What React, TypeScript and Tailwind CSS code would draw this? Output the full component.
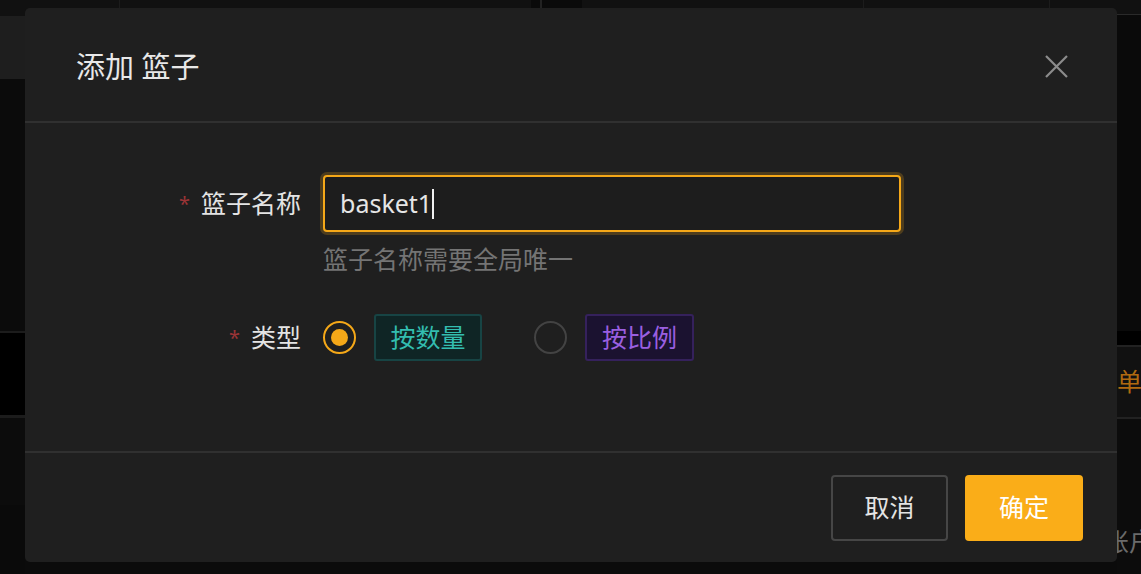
import React from "react";

export default function App() {
  const font = "font-['Noto_Sans','Noto_Sans_CJK_SC',sans-serif]";
  return (
    <div className={`relative w-[1141px] h-[574px] overflow-hidden bg-[#0b0b0b] ${font}`}>
      {/* background app */}
      <div className="flex h-full">
        <div className="flex w-[25px] flex-col">
          <div className="h-[16px] bg-[#111111]" />
          <div className="h-[63px] bg-[#1e1e1e]" />
          <div className="h-[252px] bg-[#0b0b0b]" />
          <div className="h-[2px] bg-[#1c1c1c]" />
          <div className="h-[82px] bg-black" />
          <div className="h-[3px] bg-[#1c1c1c]" />
          <div className="h-[87px] bg-[#0c0c0c]" />
          <div className="flex-1 bg-[#0a0a0a]" />
        </div>
        <div className="flex flex-1 flex-col">
          <div className="flex h-[16px] bg-[#111111]">
            <div className="w-[95px] border-r border-[#1c1c1c]" />
            <div className="w-[411px]" />
            <div className="flex w-[51px] bg-[#0a0a0a]">
              <div className="w-[9px]" />
              <div className="w-[2px] bg-[#222]" />
            </div>
            <div className="w-[282px] border-r border-[#1c1c1c]" />
            <div className="w-[186px] border-r border-[#1c1c1c]" />
          </div>
          <div className="flex-1 bg-[#0b0b0b]" />
        </div>
        <div className="flex w-[24px] flex-col">
          <div className="h-[14px] bg-[#111111]" />
          <div className="h-[1px] bg-[#2a2a2a]" />
          <div className="h-[316px] bg-[#0a0a0a]" />
          <div className="h-[14px] bg-black" />
          <div className="h-[2px] bg-[#222]" />
          <div className="flex h-[70px] items-center bg-[#111111] text-[25px] text-[#b06a10]">
            <span className="whitespace-nowrap">单</span>
          </div>
          <div className="h-[2px] bg-[#222]" />
          <div className="flex flex-1 items-center bg-[#0c0c0c] pt-[90px] text-[25px] text-[#6a6a6a]">
            <span className="ml-[-13px] whitespace-nowrap">账户</span>
          </div>
        </div>
      </div>

      {/* modal */}
      <div className="absolute left-[25px] top-[8px] flex h-[554px] w-[1092px] flex-col rounded-[5px] bg-[#1f1f1f]">
        <div className="flex h-[113px] items-center justify-between pb-[-2px] pl-[51px] pr-[48px]">
          <div className="mt-[3px] text-[29px] leading-none text-[#e8e8e8]">添加 篮子</div>
          <svg width="25" height="25" viewBox="0 0 25 25" fill="none" stroke="#8c8c8c" strokeWidth="2.2" className="mt-[3px]">
            <path d="M2 2 L23 23 M23 2 L2 23" />
          </svg>
        </div>
        <div className="h-[2px] bg-[#303030]" />
        <div className="flex h-[328px] flex-col pt-[52px]">
          {/* row 1 */}
          <div className="flex">
            <div className="flex h-[57px] w-[276px] items-center justify-end text-[25px] text-[#e4e4e4]">
              <span className="mr-[11px] text-[20px] text-[#9a3436]">*</span>
              <span>篮子名称</span>
            </div>
            <div className="ml-[22px] flex flex-col">
              <div className="flex h-[57px] w-[578px] items-center rounded-[4px] border-2 border-[#f5a818] bg-[#1d1d1d] pl-[15px] shadow-[0_0_0_3px_rgba(245,168,24,0.22)]">
                <span className="text-[25px] text-[#e6e6e6]">basket1</span>
                <span className="ml-[0px] h-[30px] w-[2px] bg-[#f0f0f0]" />
              </div>
              <div className="mt-[12px] text-[25px] leading-[30px] text-[#747474]">篮子名称需要全局唯一</div>
            </div>
          </div>
          {/* row 2 */}
          <div className="mt-[40px] flex">
            <div className="flex h-[47px] w-[276px] items-center justify-end text-[25px] text-[#e4e4e4]">
              <span className="mr-[11px] text-[20px] text-[#9a3436]">*</span>
              <span>类型</span>
            </div>
            <div className="ml-[22px] flex items-center">
              <div className="flex h-[33px] w-[33px] items-center justify-center rounded-full border-2 border-[#f5a818]">
                <div className="h-[17px] w-[17px] rounded-full bg-[#f5a818]" />
              </div>
              <div className="ml-[18px] flex h-[47px] w-[108px] items-center justify-center rounded-[3px] border-2 border-[#174444] bg-[#0f2525] text-[25px] text-[#33bdb0]">
                按数量
              </div>
              <div className="ml-[52px] h-[33px] w-[33px] rounded-full border-2 border-[#434343]" />
              <div className="ml-[18px] flex h-[47px] w-[109px] items-center justify-center rounded-[3px] border-2 border-[#35215c] bg-[#1b1230] text-[25px] text-[#9a5fe0]">
                按比例
              </div>
            </div>
          </div>
        </div>
        <div className="h-[2px] bg-[#303030]" />
        <div className="flex flex-1 items-center justify-end gap-[17px] pr-[34px]">
          <div className="flex h-[66px] w-[117px] items-center justify-center rounded-[4px] border-2 border-[#464646] text-[25px] text-[#e4e4e4]">
            取消
          </div>
          <div className="flex h-[66px] w-[118px] items-center justify-center rounded-[4px] bg-[#faad18] text-[25px] text-white">
            确定
          </div>
        </div>
      </div>
    </div>
  );
}
